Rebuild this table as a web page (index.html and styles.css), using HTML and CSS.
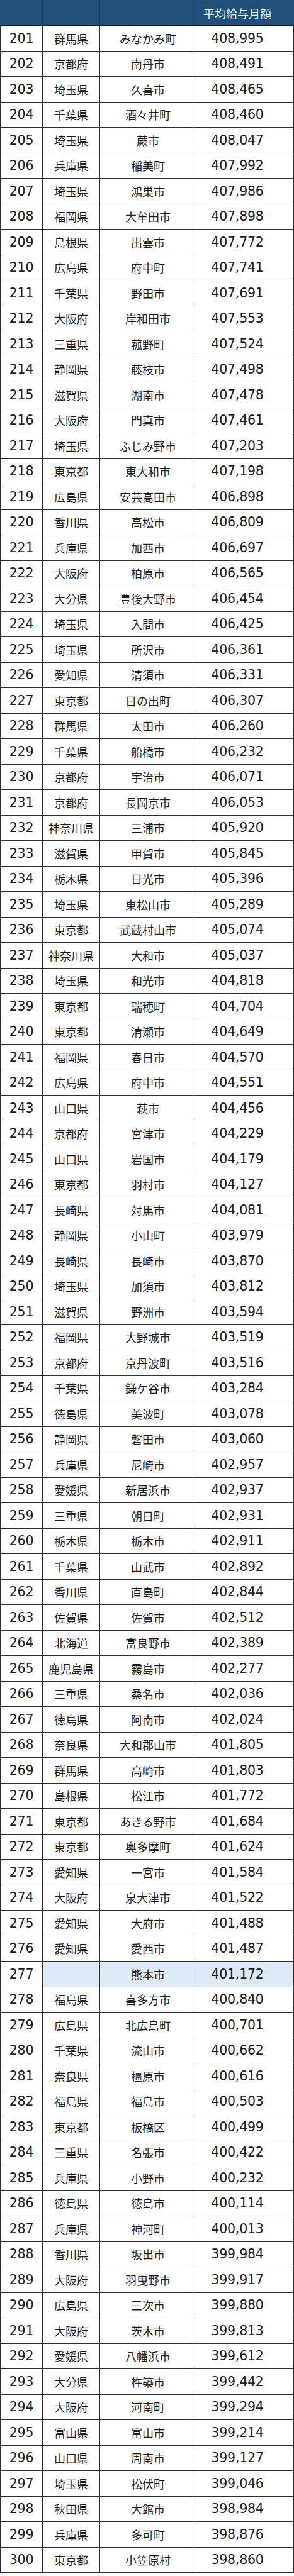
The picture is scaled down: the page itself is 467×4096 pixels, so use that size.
FILE: index.html
```html
<!DOCTYPE html>
<html lang="ja">
<head>
<meta charset="utf-8">
<title>平均給与月額</title>
<link rel="stylesheet" href="styles.css">
</head>
<body>
<div class="table">
  <div class="row head">
    <div class="cell"></div>
    <div class="cell"></div>
    <div class="cell"></div>
    <div class="cell val">平均給与月額</div>
  </div>
  <div class="row"><div class="cell num">201</div><div class="cell jp">群馬県</div><div class="cell jp">みなかみ町</div><div class="cell num val">408,995</div></div>
  <div class="row"><div class="cell num">202</div><div class="cell jp">京都府</div><div class="cell jp">南丹市</div><div class="cell num val">408,491</div></div>
  <div class="row"><div class="cell num">203</div><div class="cell jp">埼玉県</div><div class="cell jp">久喜市</div><div class="cell num val">408,465</div></div>
  <div class="row"><div class="cell num">204</div><div class="cell jp">千葉県</div><div class="cell jp">酒々井町</div><div class="cell num val">408,460</div></div>
  <div class="row"><div class="cell num">205</div><div class="cell jp">埼玉県</div><div class="cell jp">蕨市</div><div class="cell num val">408,047</div></div>
  <div class="row"><div class="cell num">206</div><div class="cell jp">兵庫県</div><div class="cell jp">稲美町</div><div class="cell num val">407,992</div></div>
  <div class="row"><div class="cell num">207</div><div class="cell jp">埼玉県</div><div class="cell jp">鴻巣市</div><div class="cell num val">407,986</div></div>
  <div class="row"><div class="cell num">208</div><div class="cell jp">福岡県</div><div class="cell jp">大牟田市</div><div class="cell num val">407,898</div></div>
  <div class="row"><div class="cell num">209</div><div class="cell jp">島根県</div><div class="cell jp">出雲市</div><div class="cell num val">407,772</div></div>
  <div class="row"><div class="cell num">210</div><div class="cell jp">広島県</div><div class="cell jp">府中町</div><div class="cell num val">407,741</div></div>
  <div class="row"><div class="cell num">211</div><div class="cell jp">千葉県</div><div class="cell jp">野田市</div><div class="cell num val">407,691</div></div>
  <div class="row"><div class="cell num">212</div><div class="cell jp">大阪府</div><div class="cell jp">岸和田市</div><div class="cell num val">407,553</div></div>
  <div class="row"><div class="cell num">213</div><div class="cell jp">三重県</div><div class="cell jp">菰野町</div><div class="cell num val">407,524</div></div>
  <div class="row"><div class="cell num">214</div><div class="cell jp">静岡県</div><div class="cell jp">藤枝市</div><div class="cell num val">407,498</div></div>
  <div class="row"><div class="cell num">215</div><div class="cell jp">滋賀県</div><div class="cell jp">湖南市</div><div class="cell num val">407,478</div></div>
  <div class="row"><div class="cell num">216</div><div class="cell jp">大阪府</div><div class="cell jp">門真市</div><div class="cell num val">407,461</div></div>
  <div class="row"><div class="cell num">217</div><div class="cell jp">埼玉県</div><div class="cell jp">ふじみ野市</div><div class="cell num val">407,203</div></div>
  <div class="row"><div class="cell num">218</div><div class="cell jp">東京都</div><div class="cell jp">東大和市</div><div class="cell num val">407,198</div></div>
  <div class="row"><div class="cell num">219</div><div class="cell jp">広島県</div><div class="cell jp">安芸高田市</div><div class="cell num val">406,898</div></div>
  <div class="row"><div class="cell num">220</div><div class="cell jp">香川県</div><div class="cell jp">高松市</div><div class="cell num val">406,809</div></div>
  <div class="row"><div class="cell num">221</div><div class="cell jp">兵庫県</div><div class="cell jp">加西市</div><div class="cell num val">406,697</div></div>
  <div class="row"><div class="cell num">222</div><div class="cell jp">大阪府</div><div class="cell jp">柏原市</div><div class="cell num val">406,565</div></div>
  <div class="row"><div class="cell num">223</div><div class="cell jp">大分県</div><div class="cell jp">豊後大野市</div><div class="cell num val">406,454</div></div>
  <div class="row"><div class="cell num">224</div><div class="cell jp">埼玉県</div><div class="cell jp">入間市</div><div class="cell num val">406,425</div></div>
  <div class="row"><div class="cell num">225</div><div class="cell jp">埼玉県</div><div class="cell jp">所沢市</div><div class="cell num val">406,361</div></div>
  <div class="row"><div class="cell num">226</div><div class="cell jp">愛知県</div><div class="cell jp">清須市</div><div class="cell num val">406,331</div></div>
  <div class="row"><div class="cell num">227</div><div class="cell jp">東京都</div><div class="cell jp">日の出町</div><div class="cell num val">406,307</div></div>
  <div class="row"><div class="cell num">228</div><div class="cell jp">群馬県</div><div class="cell jp">太田市</div><div class="cell num val">406,260</div></div>
  <div class="row"><div class="cell num">229</div><div class="cell jp">千葉県</div><div class="cell jp">船橋市</div><div class="cell num val">406,232</div></div>
  <div class="row"><div class="cell num">230</div><div class="cell jp">京都府</div><div class="cell jp">宇治市</div><div class="cell num val">406,071</div></div>
  <div class="row"><div class="cell num">231</div><div class="cell jp">京都府</div><div class="cell jp">長岡京市</div><div class="cell num val">406,053</div></div>
  <div class="row"><div class="cell num">232</div><div class="cell jp">神奈川県</div><div class="cell jp">三浦市</div><div class="cell num val">405,920</div></div>
  <div class="row"><div class="cell num">233</div><div class="cell jp">滋賀県</div><div class="cell jp">甲賀市</div><div class="cell num val">405,845</div></div>
  <div class="row"><div class="cell num">234</div><div class="cell jp">栃木県</div><div class="cell jp">日光市</div><div class="cell num val">405,396</div></div>
  <div class="row"><div class="cell num">235</div><div class="cell jp">埼玉県</div><div class="cell jp">東松山市</div><div class="cell num val">405,289</div></div>
  <div class="row"><div class="cell num">236</div><div class="cell jp">東京都</div><div class="cell jp">武蔵村山市</div><div class="cell num val">405,074</div></div>
  <div class="row"><div class="cell num">237</div><div class="cell jp">神奈川県</div><div class="cell jp">大和市</div><div class="cell num val">405,037</div></div>
  <div class="row"><div class="cell num">238</div><div class="cell jp">埼玉県</div><div class="cell jp">和光市</div><div class="cell num val">404,818</div></div>
  <div class="row"><div class="cell num">239</div><div class="cell jp">東京都</div><div class="cell jp">瑞穂町</div><div class="cell num val">404,704</div></div>
  <div class="row"><div class="cell num">240</div><div class="cell jp">東京都</div><div class="cell jp">清瀬市</div><div class="cell num val">404,649</div></div>
  <div class="row"><div class="cell num">241</div><div class="cell jp">福岡県</div><div class="cell jp">春日市</div><div class="cell num val">404,570</div></div>
  <div class="row"><div class="cell num">242</div><div class="cell jp">広島県</div><div class="cell jp">府中市</div><div class="cell num val">404,551</div></div>
  <div class="row"><div class="cell num">243</div><div class="cell jp">山口県</div><div class="cell jp">萩市</div><div class="cell num val">404,456</div></div>
  <div class="row"><div class="cell num">244</div><div class="cell jp">京都府</div><div class="cell jp">宮津市</div><div class="cell num val">404,229</div></div>
  <div class="row"><div class="cell num">245</div><div class="cell jp">山口県</div><div class="cell jp">岩国市</div><div class="cell num val">404,179</div></div>
  <div class="row"><div class="cell num">246</div><div class="cell jp">東京都</div><div class="cell jp">羽村市</div><div class="cell num val">404,127</div></div>
  <div class="row"><div class="cell num">247</div><div class="cell jp">長崎県</div><div class="cell jp">対馬市</div><div class="cell num val">404,081</div></div>
  <div class="row"><div class="cell num">248</div><div class="cell jp">静岡県</div><div class="cell jp">小山町</div><div class="cell num val">403,979</div></div>
  <div class="row"><div class="cell num">249</div><div class="cell jp">長崎県</div><div class="cell jp">長崎市</div><div class="cell num val">403,870</div></div>
  <div class="row"><div class="cell num">250</div><div class="cell jp">埼玉県</div><div class="cell jp">加須市</div><div class="cell num val">403,812</div></div>
  <div class="row"><div class="cell num">251</div><div class="cell jp">滋賀県</div><div class="cell jp">野洲市</div><div class="cell num val">403,594</div></div>
  <div class="row"><div class="cell num">252</div><div class="cell jp">福岡県</div><div class="cell jp">大野城市</div><div class="cell num val">403,519</div></div>
  <div class="row"><div class="cell num">253</div><div class="cell jp">京都府</div><div class="cell jp">京丹波町</div><div class="cell num val">403,516</div></div>
  <div class="row"><div class="cell num">254</div><div class="cell jp">千葉県</div><div class="cell jp">鎌ケ谷市</div><div class="cell num val">403,284</div></div>
  <div class="row"><div class="cell num">255</div><div class="cell jp">徳島県</div><div class="cell jp">美波町</div><div class="cell num val">403,078</div></div>
  <div class="row"><div class="cell num">256</div><div class="cell jp">静岡県</div><div class="cell jp">磐田市</div><div class="cell num val">403,060</div></div>
  <div class="row"><div class="cell num">257</div><div class="cell jp">兵庫県</div><div class="cell jp">尼崎市</div><div class="cell num val">402,957</div></div>
  <div class="row"><div class="cell num">258</div><div class="cell jp">愛媛県</div><div class="cell jp">新居浜市</div><div class="cell num val">402,937</div></div>
  <div class="row"><div class="cell num">259</div><div class="cell jp">三重県</div><div class="cell jp">朝日町</div><div class="cell num val">402,931</div></div>
  <div class="row"><div class="cell num">260</div><div class="cell jp">栃木県</div><div class="cell jp">栃木市</div><div class="cell num val">402,911</div></div>
  <div class="row"><div class="cell num">261</div><div class="cell jp">千葉県</div><div class="cell jp">山武市</div><div class="cell num val">402,892</div></div>
  <div class="row"><div class="cell num">262</div><div class="cell jp">香川県</div><div class="cell jp">直島町</div><div class="cell num val">402,844</div></div>
  <div class="row"><div class="cell num">263</div><div class="cell jp">佐賀県</div><div class="cell jp">佐賀市</div><div class="cell num val">402,512</div></div>
  <div class="row"><div class="cell num">264</div><div class="cell jp">北海道</div><div class="cell jp">富良野市</div><div class="cell num val">402,389</div></div>
  <div class="row"><div class="cell num">265</div><div class="cell jp">鹿児島県</div><div class="cell jp">霧島市</div><div class="cell num val">402,277</div></div>
  <div class="row"><div class="cell num">266</div><div class="cell jp">三重県</div><div class="cell jp">桑名市</div><div class="cell num val">402,036</div></div>
  <div class="row"><div class="cell num">267</div><div class="cell jp">徳島県</div><div class="cell jp">阿南市</div><div class="cell num val">402,024</div></div>
  <div class="row"><div class="cell num">268</div><div class="cell jp">奈良県</div><div class="cell jp">大和郡山市</div><div class="cell num val">401,805</div></div>
  <div class="row"><div class="cell num">269</div><div class="cell jp">群馬県</div><div class="cell jp">高崎市</div><div class="cell num val">401,803</div></div>
  <div class="row"><div class="cell num">270</div><div class="cell jp">島根県</div><div class="cell jp">松江市</div><div class="cell num val">401,772</div></div>
  <div class="row"><div class="cell num">271</div><div class="cell jp">東京都</div><div class="cell jp">あきる野市</div><div class="cell num val">401,684</div></div>
  <div class="row"><div class="cell num">272</div><div class="cell jp">東京都</div><div class="cell jp">奥多摩町</div><div class="cell num val">401,624</div></div>
  <div class="row"><div class="cell num">273</div><div class="cell jp">愛知県</div><div class="cell jp">一宮市</div><div class="cell num val">401,584</div></div>
  <div class="row"><div class="cell num">274</div><div class="cell jp">大阪府</div><div class="cell jp">泉大津市</div><div class="cell num val">401,522</div></div>
  <div class="row"><div class="cell num">275</div><div class="cell jp">愛知県</div><div class="cell jp">大府市</div><div class="cell num val">401,488</div></div>
  <div class="row"><div class="cell num">276</div><div class="cell jp">愛知県</div><div class="cell jp">愛西市</div><div class="cell num val">401,487</div></div>
  <div class="row mark"><div class="cell num">277</div><div class="cell jp hl"></div><div class="cell jp hl">熊本市</div><div class="cell num val hl">401,172</div></div>
  <div class="row"><div class="cell num">278</div><div class="cell jp">福島県</div><div class="cell jp">喜多方市</div><div class="cell num val">400,840</div></div>
  <div class="row"><div class="cell num">279</div><div class="cell jp">広島県</div><div class="cell jp">北広島町</div><div class="cell num val">400,701</div></div>
  <div class="row"><div class="cell num">280</div><div class="cell jp">千葉県</div><div class="cell jp">流山市</div><div class="cell num val">400,662</div></div>
  <div class="row"><div class="cell num">281</div><div class="cell jp">奈良県</div><div class="cell jp">橿原市</div><div class="cell num val">400,616</div></div>
  <div class="row"><div class="cell num">282</div><div class="cell jp">福島県</div><div class="cell jp">福島市</div><div class="cell num val">400,503</div></div>
  <div class="row"><div class="cell num">283</div><div class="cell jp">東京都</div><div class="cell jp">板橋区</div><div class="cell num val">400,499</div></div>
  <div class="row"><div class="cell num">284</div><div class="cell jp">三重県</div><div class="cell jp">名張市</div><div class="cell num val">400,422</div></div>
  <div class="row"><div class="cell num">285</div><div class="cell jp">兵庫県</div><div class="cell jp">小野市</div><div class="cell num val">400,232</div></div>
  <div class="row"><div class="cell num">286</div><div class="cell jp">徳島県</div><div class="cell jp">徳島市</div><div class="cell num val">400,114</div></div>
  <div class="row"><div class="cell num">287</div><div class="cell jp">兵庫県</div><div class="cell jp">神河町</div><div class="cell num val">400,013</div></div>
  <div class="row"><div class="cell num">288</div><div class="cell jp">香川県</div><div class="cell jp">坂出市</div><div class="cell num val">399,984</div></div>
  <div class="row"><div class="cell num">289</div><div class="cell jp">大阪府</div><div class="cell jp">羽曳野市</div><div class="cell num val">399,917</div></div>
  <div class="row"><div class="cell num">290</div><div class="cell jp">広島県</div><div class="cell jp">三次市</div><div class="cell num val">399,880</div></div>
  <div class="row"><div class="cell num">291</div><div class="cell jp">大阪府</div><div class="cell jp">茨木市</div><div class="cell num val">399,813</div></div>
  <div class="row"><div class="cell num">292</div><div class="cell jp">愛媛県</div><div class="cell jp">八幡浜市</div><div class="cell num val">399,612</div></div>
  <div class="row"><div class="cell num">293</div><div class="cell jp">大分県</div><div class="cell jp">杵築市</div><div class="cell num val">399,442</div></div>
  <div class="row"><div class="cell num">294</div><div class="cell jp">大阪府</div><div class="cell jp">河南町</div><div class="cell num val">399,294</div></div>
  <div class="row"><div class="cell num">295</div><div class="cell jp">富山県</div><div class="cell jp">富山市</div><div class="cell num val">399,214</div></div>
  <div class="row"><div class="cell num">296</div><div class="cell jp">山口県</div><div class="cell jp">周南市</div><div class="cell num val">399,127</div></div>
  <div class="row"><div class="cell num">297</div><div class="cell jp">埼玉県</div><div class="cell jp">松伏町</div><div class="cell num val">399,046</div></div>
  <div class="row"><div class="cell num">298</div><div class="cell jp">秋田県</div><div class="cell jp">大館市</div><div class="cell num val">398,984</div></div>
  <div class="row"><div class="cell num">299</div><div class="cell jp">兵庫県</div><div class="cell jp">多可町</div><div class="cell num val">398,876</div></div>
  <div class="row"><div class="cell num">300</div><div class="cell jp">東京都</div><div class="cell jp">小笠原村</div><div class="cell num val">398,860</div></div>
</div>
</body>
</html>
```

FILE: styles.css
```css
html, body {
  margin: 0;
  padding: 0;
  background: #ffffff;
}

body {
  width: 467px;
  color: #1c1c1c;
  font-family: "Noto Sans CJK JP", "DejaVu Sans", sans-serif;
}

.table {
  display: flex;
  flex-direction: column;
  width: 467px;
}

.row {
  display: grid;
  grid-template-columns: 67px 91px 153px 1fr;
  box-sizing: border-box;
  height: 40.5px;
  border-left: 1px solid #2e2e2e;
  border-bottom: 1px solid #2e2e2e;
}

.cell {
  display: flex;
  align-items: center;
  justify-content: center;
  box-sizing: border-box;
  border-right: 1px solid #2e2e2e;
  white-space: nowrap;
  overflow: hidden;
}

.head {
  height: 41px;
  background: #1f4e79;
  border-left: 1px solid #1f4e79;
  border-bottom: 1px solid #1a1a1a;
}

.head .cell {
  border-right: 1px solid #183c5c;
  color: #eef2f7;
  font-size: 18px;
  padding-top: 2px;
}

.head .cell:last-child {
  border-right-color: #1f4e79;
}

.num {
  font-family: "DejaVu Sans", "Noto Sans CJK JP", sans-serif;
  font-size: 20.5px;
  letter-spacing: -0.2px;
}

.jp {
  font-family: "Noto Sans CJK JP", sans-serif;
  font-size: 18px;
}

.val {
  padding-right: 24px;
}

.hl {
  background: #dde9f5;
}
```
